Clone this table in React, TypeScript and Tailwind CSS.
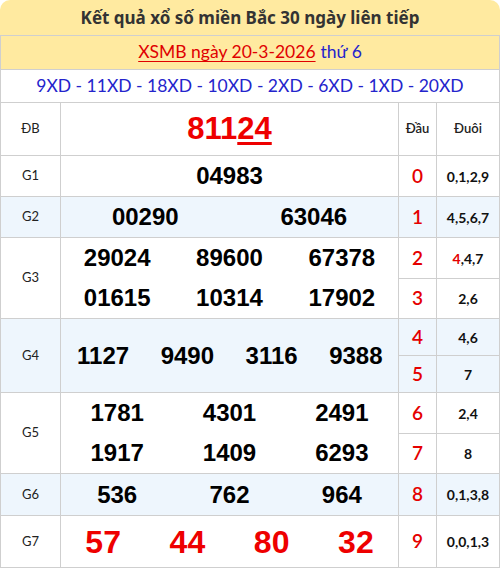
import React from "react";

function Label({ children, blue, span2 }: { children: React.ReactNode; blue?: boolean; span2?: boolean }) {
  return (
    <div
      className={`flex items-center justify-center font-[Lato,'Noto_Sans',sans-serif] text-[13px] text-[#222] ${blue ? "bg-[#eef6fd]" : "bg-white"} ${span2 ? "row-span-2" : ""}`}
    >
      {children}
    </div>
  );
}

function Dau({ d, blue }: { d: string; blue?: boolean }) {
  return (
    <div
      className={`flex items-center justify-center font-[Lato,'Noto_Sans',sans-serif] text-[19px] font-semibold text-[#e50000] ${blue ? "bg-[#eef6fd]" : "bg-white"}`}
    >
      {d}
    </div>
  );
}

function Duoi({ children, blue }: { children: React.ReactNode; blue?: boolean }) {
  return (
    <div
      className={`flex items-center justify-center font-[Lato,'Noto_Sans',sans-serif] text-[14px] font-bold text-[#111] ${blue ? "bg-[#eef6fd]" : "bg-white"}`}
    >
      {children}
    </div>
  );
}

function Nums({
  values,
  cols,
  blue,
  span2,
  red,
}: {
  values: string[];
  cols: "grid-cols-1" | "grid-cols-2" | "grid-cols-3" | "grid-cols-4";
  blue?: boolean;
  span2?: boolean;
  red?: boolean;
}) {
  const rows = values.length > 4 && cols === "grid-cols-3" ? "grid-rows-2" : "grid-rows-1";
  return (
    <div
      className={`grid ${cols} ${rows} font-['Liberation_Sans',Arial,sans-serif] ${blue ? "bg-[#eef6fd]" : "bg-white"} ${span2 ? "row-span-2" : ""}`}
    >
      {values.map((v, i) => (
        <div
          key={i}
          className={`flex items-center justify-center font-bold ${red ? "text-[32px] text-[#ee0000]" : "text-[24px] text-black"}`}
        >
          {v}
        </div>
      ))}
    </div>
  );
}

export default function App() {
  return (
    <div className="w-[500px] h-[568px] bg-white">
      <div className="h-[35px] bg-[#ffeaa0] rounded-t-[10px] flex items-center justify-center font-['Noto_Sans',Lato,sans-serif] text-[17px] font-bold text-[#333]">
        Kết quả xổ số miền Bắc 30 ngày liên tiếp
      </div>
      <div className="grid grid-cols-[59px_337px_37px_62px] grid-rows-[33px_32px_52px_40px_40px_40px_39px_36px_36px_40px_39px_41px_51px] gap-px bg-[#cfcfcf] p-px">
        <div className="col-span-4 bg-[#ffeaa0] flex items-center justify-center font-[Lato,'Noto_Sans',sans-serif] text-[17.5px]">
          <span className="text-[#e00000] underline underline-offset-[3px] decoration-[1px]">XSMB ngày 20-3-2026</span>
          <span className="text-[#2424cc] ml-[5px]">thứ 6</span>
        </div>
        <div className="col-span-4 bg-white flex items-center justify-center font-[Lato,'Noto_Sans',sans-serif] text-[17.5px] text-[#2424cc]">
          9XD - 11XD - 18XD - 10XD - 2XD - 6XD - 1XD - 20XD
        </div>

        <Label>ĐB</Label>
        <div className="bg-white flex items-center justify-center font-['Liberation_Sans',Arial,sans-serif] text-[31px] font-bold text-[#ee0000]">
          <span>
            811<span className="underline decoration-[3px] underline-offset-[3px]">24</span>
          </span>
        </div>
        <div className="bg-white flex items-center justify-center font-[Lato,'Noto_Sans',sans-serif] text-[13px] font-semibold text-[#222]">
          Đầu
        </div>
        <div className="bg-white flex items-center justify-center font-[Lato,'Noto_Sans',sans-serif] text-[13px] font-semibold text-[#222]">
          Đuôi
        </div>

        <Label>G1</Label>
        <Nums values={["04983"]} cols="grid-cols-1" />
        <Dau d="0" />
        <Duoi>0,1,2,9</Duoi>

        <Label blue>G2</Label>
        <Nums values={["00290", "63046"]} cols="grid-cols-2" blue />
        <Dau d="1" blue />
        <Duoi blue>4,5,6,7</Duoi>

        <Label span2>G3</Label>
        <Nums values={["29024", "89600", "67378", "01615", "10314", "17902"]} cols="grid-cols-3" span2 />
        <Dau d="2" />
        <Duoi>
          <span className="text-[#e50000]">4</span>,4,7
        </Duoi>
        <Dau d="3" />
        <Duoi>2,6</Duoi>

        <Label blue span2>G4</Label>
        <Nums values={["1127", "9490", "3116", "9388"]} cols="grid-cols-4" blue span2 />
        <Dau d="4" blue />
        <Duoi blue>4,6</Duoi>
        <Dau d="5" blue />
        <Duoi blue>7</Duoi>

        <Label span2>G5</Label>
        <Nums values={["1781", "4301", "2491", "1917", "1409", "6293"]} cols="grid-cols-3" span2 />
        <Dau d="6" />
        <Duoi>2,4</Duoi>
        <Dau d="7" />
        <Duoi>8</Duoi>

        <Label blue>G6</Label>
        <Nums values={["536", "762", "964"]} cols="grid-cols-3" blue />
        <Dau d="8" blue />
        <Duoi blue>0,1,3,8</Duoi>

        <Label>G7</Label>
        <Nums values={["57", "44", "80", "32"]} cols="grid-cols-4" red />
        <Dau d="9" />
        <Duoi>0,0,1,3</Duoi>
      </div>
    </div>
  );
}
